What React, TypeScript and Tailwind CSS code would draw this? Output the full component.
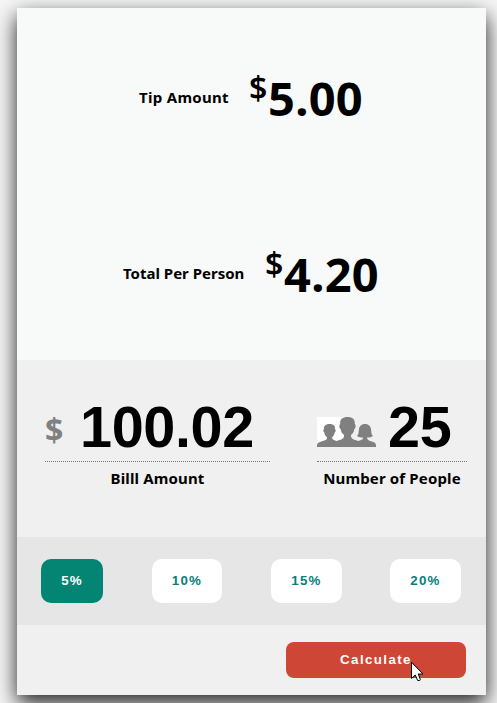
import { useState } from 'react';

function Result({ label, value, className, labelClass }: { label: string; value: string; className: string; labelClass: string }) {
  return (
    <div className={`flex h-[176px] items-start whitespace-nowrap pt-[57px] text-black ${className}`}>
      <span className={`mt-[22px] text-[15px] leading-5 font-bold ${labelClass}`}>{label}</span>
      <span className="flex">
        <span className="mt-[5px] w-[19px] text-[32px] leading-9 font-semibold">$</span>
        <span className="text-[47px] leading-[66px] font-bold tracking-[0.3px]">{value}</span>
      </span>
    </div>
  );
}

function PeopleIcon() {
  return (
    <svg width="59" height="31" viewBox="0 0 59 31" className="mt-7 shrink-0">
      <path d="M0 0H29V30H0Z" fill="#fff" />
      <path
        fill="#808080"
        d="M0 30V28.500C0 25.500 3 25 6 24C9 23 10 22.500 10 20.500C8.500 19 7.500 17.500 7.300 15.500C6 15 6 12.500 7 12C6.500 8.500 9 7 12.500 7C16 7 18.500 8.500 18 12C19 12.500 19 15 17.700 15.500C17.500 17.500 16.500 19 15 20.500C15 22.500 17 23.500 20 24C23 22.500 27.500 22.500 27 18C25 16.500 24 15 23.700 12C22 11.500 22 7.500 23.300 7C22.500 2.500 25.500 0 30.500 0C35.500 0 38.300 2.500 37.700 7C39 7.500 39 11.500 37.300 12C37 15 36 16.500 34 18C33.500 22.500 38 22.500 41 24C44 23 46 23 46 20.500C43.500 20.500 41.500 20 40 19C42 17.500 41.500 14 42 12C42.500 8.500 45 7 48 7C51 7 53.500 8.500 54 12C54.500 14 54 17.500 56 19C54.500 20 52.500 20.500 50 20.500C50 23 52 23.500 54 24.200C57.500 25.300 59 26 59 28.500V30Z"
      />
    </svg>
  );
}

export default function App() {
  const [tip, setTip] = useState('5%');
  const tips = [
    { label: '5%', width: 'w-[62px]' },
    { label: '10%', width: 'w-[70px]' },
    { label: '15%', width: 'w-[71px]' },
    { label: '20%', width: 'w-[71px]' },
  ];

  return (
    <div className="h-[703px] w-[497px] overflow-hidden bg-[#f6f6f6] pt-2 pl-[17px] font-['Noto_Sans',sans-serif]">
      <main className="relative h-[687px] w-[469px] bg-[#f0f0f0] shadow-[0_8px_20px_0_rgba(0,0,0,0.88)]">
        <section className="h-[352px] bg-[#f8faf9]">
          <Result label="Tip Amount" value="5.00" className="pl-[122px]" labelClass="w-[110px] tracking-[0.3px]" />
          <Result label="Total Per Person" value="4.20" className="pl-[106px]" labelClass="w-[142px]" />
        </section>

        <section className="flex h-[177px] gap-[47px] pt-[29px] pl-7">
          <div className="w-[225px]">
            <div className="flex h-[73px] border-b border-dotted border-[#777]">
              <span className="mt-[22px] w-[35px] text-[32px] leading-[38px] font-bold text-[#808080]">$</span>
              <span className="mt-[5px] font-['Liberation_Sans',sans-serif] text-[57.6px] leading-[66px] font-bold tracking-[-0.4px]">100.02</span>
            </div>
            <p className="mt-[6px] text-center text-[15px] leading-5 font-bold tracking-[0.15px]">Billl Amount</p>
          </div>
          <div className="w-[150px]">
            <div className="flex h-[73px] border-b border-dotted border-[#777]">
              <PeopleIcon />
              <span className="mt-[5px] ml-3 font-['Liberation_Sans',sans-serif] text-[57.6px] leading-[66px] font-bold tracking-[-0.3px]">25</span>
            </div>
            <p className="mt-[6px] text-center text-[15px] leading-5 font-bold tracking-[0.15px] whitespace-nowrap">Number of People</p>
          </div>
        </section>

        <section className="flex h-[88px] items-center bg-[#e6e6e6] pl-6">
          {tips.map(({ label, width }) => (
            <button
              key={label}
              onClick={() => setTip(label)}
              className={`mr-[49px] h-11 shrink-0 rounded-[10px] pb-px text-center font-['Liberation_Sans',sans-serif] text-[13.333px] font-bold tracking-[1.2px] last:mr-0 nth-3:mr-12 ${width} ${tip === label ? 'bg-[#048574] text-white' : 'bg-white text-[#087f7c]'}`}
            >
              {label}
            </button>
          ))}
        </section>

        <section className="flex justify-end pt-[17px] pr-5">
          <button className="h-9 w-[180px] rounded-[8px] bg-[#ce4635] font-['Liberation_Sans',sans-serif] text-[13.333px] font-bold tracking-[1.4px] text-white">
            Calculate
          </button>
        </section>

        <svg className="absolute top-[653px] left-[394px]" width="13" height="21" viewBox="0 0 13 21">
          <path d="M.5 1.200V17.500L4.200 14L6.700 19.500H8.700L9.300 18.300L7.200 13H12Z" fill="white" stroke="black" />
        </svg>
      </main>
    </div>
  );
}
